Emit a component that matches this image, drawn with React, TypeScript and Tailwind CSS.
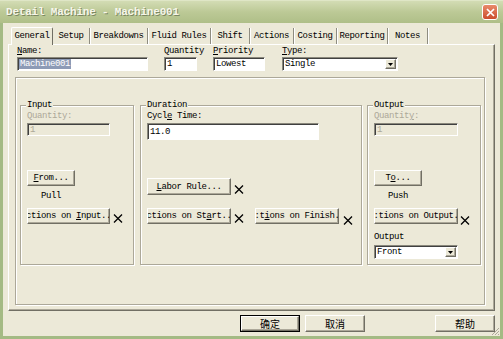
import React from "react";

const base = "font-['Liberation_Mono',monospace] text-[9px] leading-[10px] tracking-[-0.4px] whitespace-nowrap";
const mono = base + " text-black";
const monoG = base + " text-[#aca899]";
const monoW = base + " text-white";
const cjk = "font-['Noto_Sans_CJK_SC',sans-serif] text-[10px] leading-none text-black";
const raised =
  "flex items-center justify-center overflow-hidden bg-[#ece9d8] border border-t-white border-l-white border-r-[#716f64] border-b-[#716f64] shadow-[inset_-1px_-1px_0_#aca899]";
const sunken =
  "flex items-center overflow-hidden border border-t-[#8a887c] border-l-[#8a887c] border-r-white border-b-white shadow-[inset_1px_1px_0_#404040]";
const etched = "relative border border-[#aca899] shadow-[inset_1px_1px_0_white,1px_1px_0_white]";

function XMark({ className }: { className: string }) {
  return (
    <svg width="10" height="9" viewBox="0 0 10 9" className={className}>
      <path d="M1 0.5L9 8.5M9 0.5L1 8.5" stroke="black" strokeWidth="1.3" fill="none" />
    </svg>
  );
}

function Arrow() {
  return (
    <div className={raised + " w-[11px] h-[10px] mr-[1px]"}>
      <svg width="5" height="3" viewBox="0 0 5 3">
        <path d="M0 0H5L2.5 3Z" fill="black" />
      </svg>
    </div>
  );
}

function U({ children }: { children: React.ReactNode }) {
  return <span className="underline underline-offset-1">{children}</span>;
}

const tabs: { label: React.ReactNode; w: string; active?: boolean }[] = [
  { label: "General", w: "w-[42px]", active: true },
  { label: "Setup", w: "w-[37px]" },
  { label: "Breakdowns", w: "w-[58px]" },
  { label: "Fluid Rules", w: "w-[63px]" },
  { label: "Shift", w: "w-[39px]" },
  { label: "Actions", w: "w-[44px]" },
  { label: "Costing", w: "w-[43px]" },
  { label: "Reporting", w: "w-[51px]" },
  { label: "Notes", w: "w-[40px]" },
];

export default function App() {
  return (
    <div className="w-[503px] h-[339px] flex flex-col bg-[#a4ba84] overflow-hidden">
      {/* Title bar */}
      <div className="h-[23px] shrink-0 flex items-center pl-[6px] bg-gradient-to-b from-[#d3dcb4] via-[#bcc996] to-[#afbf88] border-t border-[#dfe6c6]">
        <span className="font-['Liberation_Mono',monospace] text-[11px] font-bold tracking-[-0.2px] text-[#f6f6ea] [text-shadow:1px_1px_0_#7c8862] whitespace-nowrap">
          Detail Machine - Machine001
        </span>
        <div className="ml-auto mr-[5px] w-[16px] h-[16px] rounded-[3px] border border-white bg-gradient-to-b from-[#e88a6a] to-[#cc4d2c] flex items-center justify-center">
          <svg width="9" height="9" viewBox="0 0 9 9">
            <path d="M1 1L8 8M8 1L1 8" stroke="white" strokeWidth="1.7" fill="none" />
          </svg>
        </div>
      </div>

      {/* Body */}
      <div className="relative flex-1 flex flex-col bg-[#ece9d8] border-x-[3px] border-b-[3px] border-[#a4ba84] pt-[4px]">
        {/* Tabs */}
        <div className="h-[17px] flex items-end pl-[8px]">
          {tabs.map((t, i) =>
            t.active ? (
              <div
                key={i}
                className={t.w + " relative z-10 h-[18px] -mb-[1px] flex items-center justify-center bg-[#ece9d8] border-t border-l border-white border-r border-r-[#716f64] rounded-t-[2px]"}
              >
                <span className={mono + " -mt-[1px]"}>{t.label}</span>
              </div>
            ) : (
              <div key={i} className={t.w + " h-[16px] flex items-center justify-center border-r border-r-[#8e8c80] shadow-[1px_0_0_white]"}>
                <span className={mono}>{t.label}</span>
              </div>
            )
          )}
        </div>

        {/* Tab panel */}
        <div className="ml-[5px] w-[487px] h-[267px] flex flex-col pl-[6px] pt-[1px] border border-t-white border-l-white border-r-[#716f64] border-b-[#716f64] shadow-[inset_-1px_-1px_0_#aca899]">
          {/* Top row */}
          <div className="flex ml-[2px]">
            <div className="w-[131px] flex flex-col">
              <div className={mono + " h-[10px]"}><U>N</U>ame:</div>
              <div className={sunken + " mt-[1px] h-[14px] bg-white pl-[1px]"}>
                <span className={monoW + " bg-[#8d9bb6] px-[1px]"}>Machine001</span>
              </div>
            </div>
            <div className="ml-[16px] w-[33px] flex flex-col">
              <div className={mono + " h-[10px]"}>Quantity</div>
              <div className={sunken + " mt-[1px] h-[14px] bg-white pl-[2px]"}>
                <span className={mono}>1</span>
              </div>
            </div>
            <div className="ml-[16px] w-[52px] flex flex-col">
              <div className={mono + " h-[10px]"}><U>P</U>riority</div>
              <div className={sunken + " mt-[1px] h-[14px] bg-white pl-[2px]"}>
                <span className={mono}>Lowest</span>
              </div>
            </div>
            <div className="ml-[17px] w-[116px] flex flex-col">
              <div className={mono + " h-[10px]"}><U>T</U>ype:</div>
              <div className={sunken + " mt-[1px] h-[14px] bg-white pl-[2px] justify-between"}>
                <span className={mono}>Single</span>
                <Arrow />
              </div>
            </div>
          </div>

          {/* Inner box */}
          <div className={etched + " mt-[6px] w-[470px] h-[228px] flex pl-[4px] pt-[27px]"}>
            {/* Input */}
            <div className={etched + " w-[114px] h-[160px] flex flex-col pt-[5px] pl-[6px]"}>
              <span className={mono + " absolute -top-[6px] left-[5px] bg-[#ece9d8] px-[1px]"}>Input</span>
              <div className={monoG + " h-[10px]"}>Quantity:</div>
              <div className={sunken + " mt-[2px] h-[13px] w-[83px] pl-[2px]"}>
                <span className={monoG}>1</span>
              </div>
              <div className={raised + " mt-[34px] h-[16px] w-[48px]"}>
                <span className={mono}><U>F</U>rom...</span>
              </div>
              <div className={mono + " mt-[5px] w-[48px] h-[10px] text-center"}>Pull</div>
              <div className="mt-[7px] flex items-end">
                <div className={raised + " h-[16px] w-[83px]"}>
                  <span className={mono}>ctions on <U>I</U>nput..</span>
                </div>
                <XMark className="ml-[3px] mb-[1px]" />
              </div>
            </div>

            {/* Duration */}
            <div className={etched + " ml-[6px] w-[222px] h-[160px] flex flex-col pt-[5px] pl-[6px]"}>
              <span className={mono + " absolute -top-[6px] left-[5px] bg-[#ece9d8] px-[1px]"}>Duration</span>
              <div className={mono + " h-[10px]"}>Cycl<U>e</U> Time:</div>
              <div className={sunken + " mt-[2px] h-[17px] w-[172px] bg-white pl-[2px]"}>
                <span className={mono}>11.0</span>
              </div>
              <div className="mt-[38px] flex items-end">
                <div className={raised + " h-[17px] w-[84px]"}>
                  <span className={mono}><U>L</U>abor Rule...</span>
                </div>
                <XMark className="ml-[3px] mb-[1px]" />
              </div>
              <div className="mt-[13px] flex items-end">
                <div className={raised + " h-[16px] w-[84px]"}>
                  <span className={mono}>ctions on St<U>a</U>rt..</span>
                </div>
                <XMark className="ml-[3px] mb-[1px]" />
                <div className={raised + " ml-[11px] h-[16px] w-[84px]"}>
                  <span className={mono}>:t<U>i</U>ons on Finish.</span>
                </div>
                <XMark className="ml-[4px] -mb-[1px]" />
              </div>
            </div>

            {/* Output */}
            <div className={etched + " ml-[5px] w-[114px] h-[160px] flex flex-col pt-[5px] pl-[6px]"}>
              <span className={mono + " absolute -top-[6px] left-[5px] bg-[#ece9d8] px-[1px]"}>Output</span>
              <div className={monoG + " h-[10px]"}>Quantit<U>y</U>:</div>
              <div className={sunken + " mt-[2px] h-[13px] w-[84px] pl-[2px]"}>
                <span className={monoG}>1</span>
              </div>
              <div className={raised + " mt-[34px] h-[16px] w-[48px]"}>
                <span className={mono}>T<U>o</U>...</span>
              </div>
              <div className={mono + " mt-[5px] w-[48px] h-[10px] text-center"}>Push</div>
              <div className="mt-[7px] flex items-end">
                <div className={raised + " h-[16px] w-[84px]"}>
                  <span className={mono}>:tions on Output.</span>
                </div>
                <XMark className="ml-[2px] -mb-[1px]" />
              </div>
              <div className={mono + " mt-[8px] h-[10px]"}>Output</div>
              <div className={sunken + " mt-[3px] h-[14px] w-[84px] bg-white pl-[2px] justify-between"}>
                <span className={mono}>Front</span>
                <Arrow />
              </div>
            </div>
          </div>
        </div>

        {/* Bottom buttons */}
        <div className="mt-[4px] flex pl-[237px]">
          <div className="w-[60px] h-[17px] border border-black flex">
            <div className={raised + " flex-1"}>
              <span className={cjk}>确定</span>
            </div>
          </div>
          <div className={raised + " ml-[5px] w-[60px] h-[17px]"}>
            <span className={cjk}>取消</span>
          </div>
          <div className={raised + " ml-[70px] w-[60px] h-[17px]"}>
            <span className={cjk}>帮助</span>
          </div>
        </div>

        {/* Resize grip */}
        <svg width="10" height="10" viewBox="0 0 10 10" className="absolute right-0 bottom-0">
          <path d="M9 2L2 9M9 5L5 9M9 8L8 9" stroke="#aca899" strokeWidth="1" />
        </svg>
      </div>
    </div>
  );
}
